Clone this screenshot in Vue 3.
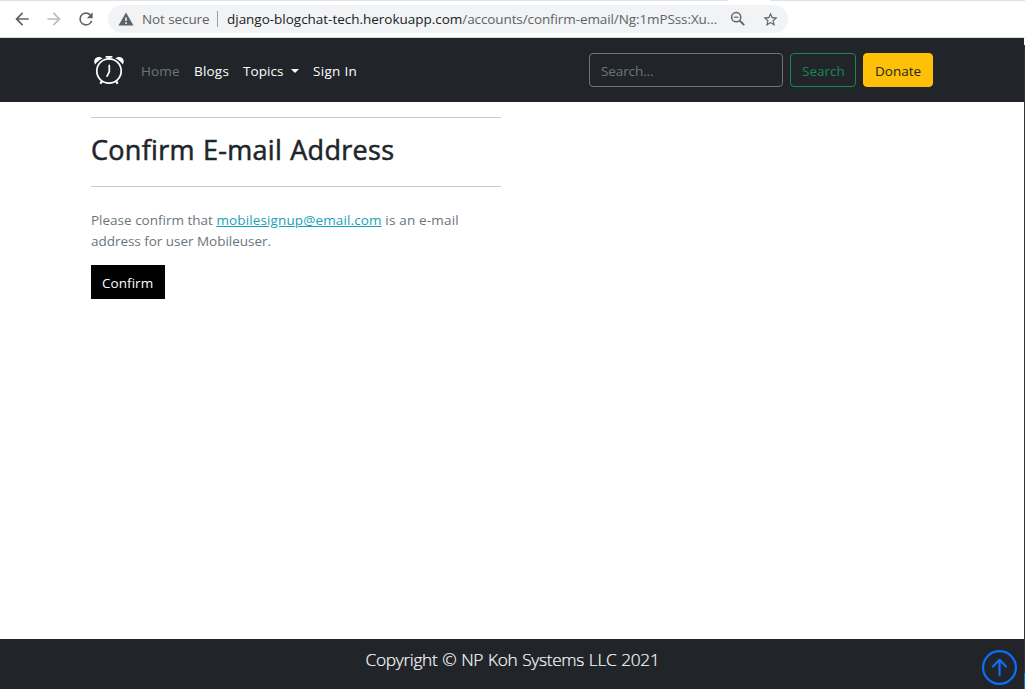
<script setup>
const links = [
  { label: 'Home', cls: 'home' },
  { label: 'Blogs', cls: 'blogs' },
  { label: 'Topics', cls: 'topics', caret: true },
  { label: 'Sign In', cls: 'signin' },
]
</script>

<template>
  <div class="window">
    <header class="toolbar">
      <i class="tab-gap"></i>
      <svg class="ctl" viewBox="0 0 24 24"><path d="M20 11H7.83l5.59-5.59L12 4l-8 8 8 8 1.41-1.41L7.83 13H20v-2z" /></svg>
      <svg class="ctl dim" viewBox="0 0 24 24"><path d="M4 11h12.17l-5.59-5.59L12 4l8 8-8 8-1.41-1.41L16.17 13H4v-2z" /></svg>
      <svg class="ctl" viewBox="0 0 24 24"><path d="M17.65 6.35A7.96 7.96 0 0 0 12 4a8 8 0 1 0 7.73 10h-2.08A6 6 0 1 1 12 6c1.66 0 3.14.69 4.22 1.78L13 11h7V4l-2.35 2.35z" /></svg>
      <div class="omnibox">
        <svg class="warn" viewBox="0 0 16 14"><path fill-rule="evenodd" d="M8 .5 15.5 13.5H.5zM7.2 5.5v3.6h1.6V5.5zM7.2 10.3v1.6h1.6v-1.6z" /></svg>
        <span class="secure">Not secure</span>
        <i class="sep"></i>
        <span class="url"><span class="host">django-blogchat-tech.herokuapp.com</span><span class="path">/accounts/confirm-email/Ng:1mPSss:Xu...</span></span>
        <svg class="lens" viewBox="0 0 16 16"><g fill="none" stroke="#5f6368" stroke-width="1.5"><circle cx="6.2" cy="6.2" r="4.6" /><path d="M9.7 9.7 14.2 14.2" stroke-width="1.9" /><path d="M3.9 6.2h4.6" stroke-width="1.2" /></g></svg>
        <svg class="star" viewBox="0 0 24 24"><path d="m22 9.24-7.19-.62L12 2 9.19 8.63 2 9.24l5.46 4.73L5.82 21 12 17.27 18.18 21l-1.63-7.03L22 9.24zM12 15.4l-3.76 2.27 1-4.28-3.32-2.88 4.38-.38L12 6.1l1.71 4.04 4.38.38-3.32 2.88 1 4.28L12 15.4z" /></svg>
      </div>
    </header>
    <i class="edge"></i><i class="edge-blue"></i>

    <nav class="navbar">
      <svg class="clock" viewBox="0 0 32 32">
        <g fill="none" stroke="#fff">
          <circle cx="16" cy="17" r="12.2" stroke-width="1.7" />
          <path d="M16.3 11.4v6.2l-2.2 4.6" stroke-width="1.7" stroke-linejoin="round" stroke-linecap="round" />
          <path d="M16 3v2.5M8.8 27.4l-1.4 2.4M23.2 27.4l1.4 2.4" stroke-width="2.1" />
        </g>
        <path fill="#fff" d="M12.6 2h6.8v1.8h-6.8zM2.2 10.5C.2 7.5 1.6 3.8 5 3.1c2-.3 3.7.3 4.6 1.5C6.6 5.8 4 8 2.2 10.5zM29.8 10.5c2-3 .6-6.7-2.8-7.4-2-.3-3.7.3-4.6 1.5 3 1.2 5.6 3.4 7.4 5.9z" />
      </svg>
      <a v-for="l in links" :key="l.label" class="nav-link" :class="l.cls"><span>{{ l.label }}</span><i v-if="l.caret" class="caret"></i></a>
      <div class="search-input"><span>Search...</span></div>
      <div class="btn search"><span>Search</span></div>
      <div class="btn donate"><span>Donate</span></div>
    </nav>

    <main>
      <section class="card">
        <h1><span>Confirm E-mail Address</span></h1>
        <p><span class="t1">Please confirm that </span><a>mobilesignup@email.com</a><span class="t2"> is an e-mail</span><br><span class="t3">address for user Mobileuser.</span></p>
        <button><span>Confirm</span></button>
      </section>
    </main>

    <footer>
      <span>Copyright © NP Koh Systems LLC 2021</span>
      <svg class="up" viewBox="0 0 16 16"><path fill="#0d6efd" fill-rule="evenodd" d="M1 8a7 7 0 1 0 14 0A7 7 0 0 0 1 8zm15 0A8 8 0 1 1 0 8a8 8 0 0 1 16 0zm-7.5 3.5a.5.5 0 0 1-1 0V5.707L5.354 7.854a.5.5 0 1 1-.708-.708l3-3a.5.5 0 0 1 .708 0l3 3a.5.5 0 0 1-.708.708L8.5 5.707V11.5z" /></svg>
    </footer>
  </div>
</template>

<style>
body { margin: 0; background: #fff; overflow: hidden; }
</style>

<style scoped>
* { box-sizing: border-box; }
.window { position: relative; width: 1025px; height: 689px; display: flex; flex-direction: column; font-family: "Open Sans", "Noto Sans", sans-serif; font-size: 13.5px; background: #fff; white-space: nowrap; }
.toolbar { position: relative; height: 38px; flex: none; display: flex; align-items: center; border-top: 1px solid #dee1e6; border-bottom: 1px solid #dadce0; padding-left: 12px; }
.tab-gap { position: absolute; left: 728px; top: -1px; width: 42px; height: 1px; background: #fff; }
.ctl { width: 20px; height: 20px; margin-right: 12px; fill: #5f6368; }
.dim { fill: #babcbe; }
.omnibox { width: 680px; height: 28px; border-radius: 14px; background: #f1f3f4; display: flex; align-items: center; padding-left: 10px; color: #5f6368; }
.warn { width: 16px; height: 14px; fill: #5f6368; margin-right: 8px; }
.secure { width: 75px; letter-spacing: -0.1px; }
.sep { width: 1px; height: 16px; background: #9aa0a6; margin-right: 9px; }
.url { width: 503px; }
.host { color: #202124; letter-spacing: -0.02px; }
.path { letter-spacing: -0.1px; }
.lens { width: 16px; height: 16px; margin-right: 15.5px; }
.star { width: 17px; height: 17px; fill: #5f6368; }
.edge { position: absolute; z-index: 2; left: 1024px; top: 38px; width: 1px; height: 651px; background: linear-gradient(#fff 7px, #303236 7px); }
.edge-blue { position: absolute; z-index: 3; left: 1024px; top: 673px; width: 1px; height: 16px; background: #087bc1; }
.navbar { height: 64px; flex: none; display: flex; align-items: center; background: #212529; padding-left: 93px; color: #fff; }
.clock { width: 32px; height: 32px; margin-right: 16px; }
.nav-link { display: flex; align-items: center; height: 20px; margin-top: 2px; }
.home { width: 53px; color: #6c757d; letter-spacing: 0.15px; }
.blogs { width: 49px; letter-spacing: 0.2px; }
.topics { width: 70px; letter-spacing: 0.05px; }
.caret { border: 4.5px solid transparent; border-top-color: #fff; border-bottom: 0; margin: -1px 0 0 7.5px; }
.signin { width: 276px; letter-spacing: 0.3px; }
.search-input { width: 194px; height: 34px; border: 1px solid #6c757d; border-radius: 4px; padding: 2px 0 0 11px; line-height: 30px; color: #6c757d; margin-right: 7px; letter-spacing: -0.1px; }
.btn { height: 34px; border: 1px solid #198754; border-radius: 4px; color: #198754; padding: 2px 0 0 11px; line-height: 30px; }
.search { width: 66px; margin-right: 7px; }
.donate { width: 70px; background: #ffc107; border-color: #ffc107; color: #212529; }
main { flex: 1; padding: 15px 0 0 91px; }
.card { width: 410px; border-top: 1px solid #c8c9ca; }
h1 { height: 69px; margin: 0; border-bottom: 1px solid #c8c9ca; font-size: 27px; font-weight: 400; letter-spacing: 0.3px; word-spacing: 0.8px; -webkit-text-stroke: 0.55px #212529; color: #212529; line-height: 64px; }
p { margin: 23px 0 13px; line-height: 21px; color: #6c757d; }
p span { white-space: pre; }
p a { color: #17a2b8; text-decoration: underline; letter-spacing: 0.13px; }
.t2 { letter-spacing: 0.18px; }
.t3 { letter-spacing: -0.03px; }
button { display: block; border: 0; width: 74px; height: 34px; background: #000; color: #fff; font: inherit; padding: 2px 0 0 11px; text-align: left; letter-spacing: 0.05px; }
footer { position: relative; height: 50px; flex: none; background: #212529; color: #f8f9fa; text-align: center; font-size: 17.3px; font-weight: 300; letter-spacing: -0.3px; word-spacing: 0.6px; line-height: 42px; }
footer span { -webkit-text-stroke: 0.2px #f8f9fa; }
.up { position: absolute; left: 982px; top: 11px; width: 35px; height: 35px; }
</style>
